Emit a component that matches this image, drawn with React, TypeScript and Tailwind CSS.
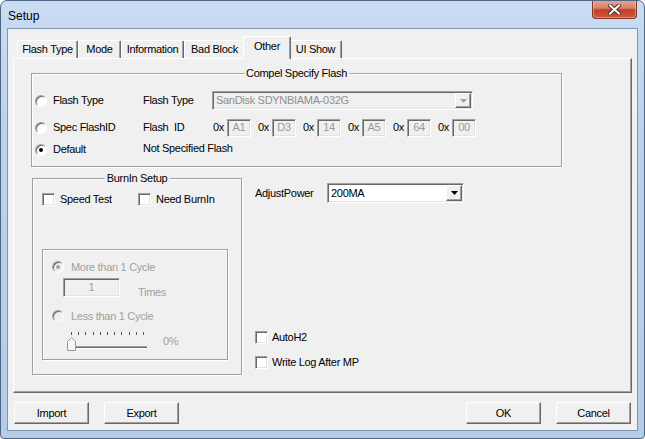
import clsx from 'clsx';
import type { ReactNode } from 'react';

// classic 3D edges used by the dialog controls
const etched = 'border border-[#a0a0a0] shadow-[inset_1px_1px_0_#fff,1px_1px_0_#fff]';
const sunken =
  'border border-t-[#a0a0a0] border-l-[#a0a0a0] border-r-white border-b-white shadow-[inset_1px_1px_0_#696969,inset_-1px_-1px_0_#e3e3e3]';
const raised =
  'border border-t-white border-l-white border-r-[#696969] border-b-[#696969] shadow-[inset_-1px_-1px_0_#a0a0a0]';

const tabs = [
  { label: 'Flash Type', width: 'w-[61px]' },
  { label: 'Mode', width: 'w-[43px]' },
  { label: 'Information', width: 'w-[63px]' },
  { label: 'Bad Block', width: 'w-[61px]' },
  { label: 'Other', width: 'w-[48px]', active: true },
  { label: 'UI Show', width: 'w-[53px]' },
];

const flashId = ['A1', 'D3', '14', 'A5', '64', '00'];

function GroupBox({ title, className, children }: { title?: string; className?: string; children: ReactNode }) {
  return (
    <div className={clsx('relative shrink-0', etched, className)}>
      {title && (
        <span className="absolute -top-[7px] left-1/2 -translate-x-1/2 whitespace-nowrap bg-[#f0f0f0] px-[2px] leading-[13px]">
          {title}
        </span>
      )}
      {children}
    </div>
  );
}

function Radio({ checked = false, disabled = false }: { checked?: boolean; disabled?: boolean }) {
  return (
    <span
      className={clsx(
        'flex h-[12px] w-[12px] shrink-0 items-center justify-center rounded-full border border-t-[#a0a0a0] border-l-[#a0a0a0] border-r-white border-b-white shadow-[inset_1px_1px_0_#696969]',
        disabled ? 'bg-[#f0f0f0]' : 'bg-white',
      )}
    >
      {checked && <span className={clsx('h-[4px] w-[4px] rounded-full', disabled ? 'bg-[#a0a0a0]' : 'bg-black')} />}
    </span>
  );
}

function Checkbox() {
  return <span className={clsx('h-[13px] w-[13px] shrink-0 bg-white', sunken)} />;
}

function Combo({ value, disabled = false, className }: { value: string; disabled?: boolean; className?: string }) {
  return (
    <div className={clsx('flex shrink-0', sunken, disabled ? 'bg-[#f0f0f0] text-[#8f8f8f]' : 'bg-white', className)}>
      <span className="flex flex-1 items-center pl-[3px]">{value}</span>
      <span className={clsx('m-[1px] flex w-[16px] items-center justify-center bg-[#f0f0f0]', raised)}>
        <svg width="7" height="4" viewBox="0 0 7 4">
          <path d="M0 0h7L3.5 4z" fill={disabled ? '#a0a0a0' : '#000'} />
        </svg>
      </span>
    </div>
  );
}

function Button({ label, className }: { label: string; className?: string }) {
  return (
    <div className={clsx('flex h-[22px] w-[75px] items-center justify-center bg-[#f0f0f0]', raised, className)}>
      {label}
    </div>
  );
}

function CloseButton() {
  return (
    <div className="-mt-px mr-[7px] flex h-[19px] w-[45px] items-center justify-center rounded-b-[4px] border border-t-0 border-[#7a3628] bg-[linear-gradient(180deg,#e9a797_0%,#d9806a_45%,#c23f25_55%,#cc5a3d_100%)] shadow-[inset_0_0_0_1px_rgba(255,255,255,0.35)]">
      <svg width="13" height="11" viewBox="0 0 13 11">
        <path d="M2 1.5l9 8M11 1.5l-9 8" stroke="#5a2a22" strokeWidth="4" strokeLinecap="square" />
        <path d="M2 1.5l9 8M11 1.5l-9 8" stroke="#fff" strokeWidth="2" strokeLinecap="square" />
      </svg>
    </div>
  );
}

function Slider() {
  return (
    <svg width="80" height="19" viewBox="0 0 80 19">
      {Array.from({ length: 11 }, (_, i) => (
        <rect key={i} x={4 + Math.round(i * 7.2)} y="0" width="1" height="3" fill="#5a5a5a" />
      ))}
      <rect x="8" y="14" width="72" height="1" fill="#a0a0a0" />
      <rect x="8" y="15" width="72" height="1" fill="#696969" />
      <rect x="8" y="16" width="72" height="1" fill="#fff" />
      <path d="M0.5 9.5L4.5 5.5L8.5 9.5V18.5H0.5Z" fill="#f7f7f7" stroke="#9a9a9a" />
    </svg>
  );
}

export default function App() {
  return (
    <div className="h-[439px] w-[645px] overflow-hidden rounded-t-[7px] rounded-b-[4px] border border-[#4f6584] bg-[linear-gradient(180deg,#cadcf2_0%,#bcd2ec_30%,#b5cce8_100%)] font-['Liberation_Sans',Arial,sans-serif] text-[11px] leading-[13px] tracking-[-0.3px] text-black">
      <div className="flex h-[28px] items-start justify-between">
        <span className="ml-[7px] mt-[8px] text-[12px] leading-[15px] tracking-normal">Setup</span>
        <CloseButton />
      </div>

      <div className="ml-[7px] h-[401px] w-[629px] bg-[#f0f0f0] shadow-[0_0_0_1px_#7f96b4]">
        {/* tab strip */}
        <div className="flex h-[29px] items-end pl-[9px]">
          {tabs.map((t) => (
            <div
              key={t.label}
              className={clsx(
                'flex items-center justify-center rounded-t-[2px] border-t border-l border-r border-t-white border-l-white border-r-[#696969] shadow-[inset_-1px_0_0_#a0a0a0]',
                t.width,
                t.active ? 'relative z-10 -mx-[2px] -mb-px h-[23px] bg-[#f0f0f0] pb-[3px]' : 'h-[18px]',
              )}
            >
              {t.label}
            </div>
          ))}
        </div>

        {/* Other page */}
        <div className="ml-[5px] h-[335px] w-[619px] border border-t-white border-l-white border-r-[#696969] border-b-[#696969] pl-[17px] pt-[14px] shadow-[inset_-1px_-1px_0_#a0a0a0]">
          <GroupBox title="Compel Specify Flash" className="h-[94px] w-[531px] pl-[3px] pt-[17px]">
            <div className="flex h-[19px] items-center">
              <div className="flex w-[108px] items-center">
                <Radio />
                <span className="ml-[6px]">Flash Type</span>
              </div>
              <span className="w-[69px]">Flash Type</span>
              <Combo value="SanDisk SDYNBIAMA-032G" disabled className="h-[19px] w-[261px]" />
            </div>

            <div className="mt-[8px] flex h-[19px] items-center">
              <div className="flex w-[108px] items-center">
                <Radio />
                <span className="ml-[6px]">Spec FlashID</span>
              </div>
              <span className="w-[69px] whitespace-pre">Flash  ID</span>
              <div className="flex gap-[6px]">
                {flashId.map((b) => (
                  <div key={b} className="flex items-center">
                    <span className="w-[15px] pl-[1px]">0x</span>
                    <span className={clsx('flex h-[18px] w-[24px] items-center justify-center bg-[#f0f0f0] text-[#999]', sunken)}>
                      {b}
                    </span>
                  </div>
                ))}
              </div>
            </div>

            <div className="mt-[3px] flex h-[19px] items-center">
              <div className="flex w-[108px] items-center">
                <Radio checked />
                <span className="ml-[6px]">Default</span>
              </div>
              <span className="mb-[3px]">Not Specified Flash</span>
            </div>
          </GroupBox>

          <div className="ml-[1px] mt-[11px] flex">
            <GroupBox title="BurnIn Setup" className="h-[197px] w-[210px] pl-[9px] pt-[14px]">
              <div className="flex h-[13px] items-center">
                <div className="flex w-[96px] items-center">
                  <Checkbox />
                  <span className="ml-[5px]">Speed Test</span>
                </div>
                <Checkbox />
                <span className="ml-[5px]">Need BurnIn</span>
              </div>

              <div className={clsx('mt-[43px] h-[111px] w-[186px] pl-[9px] pt-[11px] text-[#a0a0a0]', etched)}>
                <div className="flex h-[12px] items-center">
                  <Radio checked disabled />
                  <span className="ml-[7px]">More than 1 Cycle</span>
                </div>
                <div className="mt-[5px] flex h-[19px] items-start">
                  <div className={clsx('ml-[11px] flex h-[19px] w-[57px] items-center justify-center bg-[#f0f0f0]', sunken)}>1</div>
                  <span className="ml-[18px] mt-[8px]">Times</span>
                </div>
                <div className="mt-[13px] flex h-[12px] items-center">
                  <Radio disabled />
                  <span className="ml-[7px]">Less than 1 Cycle</span>
                </div>
                <div className="mt-[10px] flex items-center">
                  <div className="ml-[15px] flex">
                    <Slider />
                  </div>
                  <span className="ml-[16px]">0%</span>
                </div>
              </div>
            </GroupBox>

            <div className="ml-[13px] flex flex-col">
              <div className="mt-[5px] flex items-center">
                <span className="w-[72px]">AdjustPower</span>
                <Combo value="200MA" className="h-[20px] w-[137px]" />
              </div>
              <div className="mt-[128px] flex h-[13px] items-center">
                <Checkbox />
                <span className="ml-[4px]">AutoH2</span>
              </div>
              <div className="mt-[12px] flex h-[13px] items-center">
                <Checkbox />
                <span className="ml-[4px]">Write Log After MP</span>
              </div>
            </div>
          </div>
        </div>

        <div className="mt-[9px] flex px-[6px]">
          <Button label="Import" />
          <Button label="Export" className="ml-[15px]" />
          <Button label="OK" className="ml-auto" />
          <Button label="Cancel" className="ml-[15px]" />
        </div>
      </div>
    </div>
  );
}
